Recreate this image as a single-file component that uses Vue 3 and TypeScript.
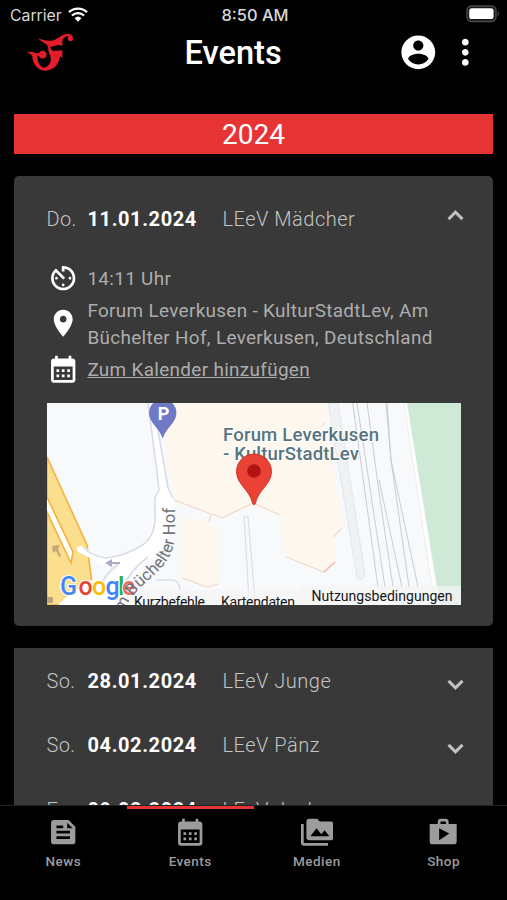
<script setup lang="ts">
import { ref } from 'vue'

interface EventRow {
  day: string
  date: string
  title: string
}

interface Tab {
  label: string
  icon: string
}

const icons = {
  account:
    'M12 2C6.48 2 2 6.48 2 12s4.48 10 10 10 10-4.48 10-10S17.52 2 12 2zm0 3c1.66 0 3 1.34 3 3s-1.34 3-3 3-3-1.34-3-3 1.34-3 3-3zm0 14.2c-2.5 0-4.71-1.28-6-3.22.03-1.99 4-3.08 6-3.08 1.99 0 5.97 1.09 6 3.08-1.29 1.94-3.5 3.22-6 3.22z',
  more: 'M12 8c1.1 0 2-.9 2-2s-.9-2-2-2-2 .9-2 2 .9 2 2 2zm0 2c-1.1 0-2 .9-2 2s.9 2 2 2 2-.9 2-2-.9-2-2-2zm0 6c-1.1 0-2 .9-2 2s.9 2 2 2 2-.9 2-2-.9-2-2-2z',
  up: 'M7.41 15.41 12 10.83l4.59 4.58L18 14l-6-6-6 6z',
  down: 'M7.41 8.59 12 13.17l4.59-4.58L18 10l-6 6-6-6z',
  timer:
    'M11 17c0 .55.45 1 1 1s1-.45 1-1-.45-1-1-1-1 .45-1 1zm0-14v4h2V5.08c3.39.49 6 3.39 6 6.92 0 3.87-3.13 7-7 7s-7-3.13-7-7c0-1.68.59-3.22 1.58-4.42L12 13l1.41-1.41-6.8-6.8v.02C4.42 6.45 3 9.05 3 12c0 4.97 4.02 9 9 9 4.97 0 9-4.03 9-9s-4.03-9-9-9h-1zm7 9c0-.55-.45-1-1-1s-1 .45-1 1 .45 1 1 1 1-.45 1-1zM6 12c0 .55.45 1 1 1s1-.45 1-1-.45-1-1-1-1 .45-1 1z',
  place:
    'M12 2C8.13 2 5 5.13 5 9c0 5.25 7 13 7 13s7-7.75 7-13c0-3.87-3.13-7-7-7zm0 9.5c-1.38 0-2.5-1.12-2.5-2.5s1.12-2.5 2.5-2.5 2.5 1.12 2.5 2.5-1.12 2.5-2.5 2.5z',
  calendar:
    'M19 4h-1V2h-2v2H8V2H6v2H5c-1.1 0-1.99.9-1.99 2L3 20c0 1.1.89 2 2 2h14c1.1 0 2-.9 2-2V6c0-1.1-.9-2-2-2zm0 16H5V10h14v10zM9 14H7v-2h2v2zm4 0h-2v-2h2v2zm4 0h-2v-2h2v2zm-8 4H7v-2h2v2zm4 0h-2v-2h2v2zm4 0h-2v-2h2v2z',
  news: 'M16 3H5c-1.1 0-2 .9-2 2v14c0 1.1.9 2 2 2h14c1.1 0 2-.9 2-2V8l-5-5zM7 7h5v2H7V7zm10 10H7v-2h10v2zm0-4H7v-2h10v2zm-2-4V5l4 4h-4z',
  media:
    'M2 6H0v5h.01L0 20c0 1.1.9 2 2 2h18v-2H2V6zm20-2h-8l-2-2H6c-1.1 0-1.99.9-1.99 2L4 16c0 1.1.9 2 2 2h16c1.1 0 2-.9 2-2V6c0-1.1-.9-2-2-2zM7 15l4.5-6 3.5 4.51 2.5-3.01L21 15H7z',
  shop: 'M16 6V4c0-1.11-.89-2-2-2h-4c-1.11 0-2 .89-2 2v2H2v13c0 1.11.89 2 2 2h16c1.11 0 2-.89 2-2V6h-6zm-6-2h4v2h-4V4zM9 18V9l7.5 4L9 18z',
}

const openEvent: EventRow = { day: 'Do.', date: '11.01.2024', title: 'LEeV Mädcher' }

const upcoming: EventRow[] = [
  { day: 'So.', date: '28.01.2024', title: 'LEeV Junge' },
  { day: 'So.', date: '04.02.2024', title: 'LEeV Pänz' },
  { day: 'Fr.', date: '09.02.2024', title: 'LEeV Jeck' },
]

const tabs: Tab[] = [
  { label: 'News', icon: icons.news },
  { label: 'Events', icon: icons.calendar },
  { label: 'Medien', icon: icons.media },
  { label: 'Shop', icon: icons.shop },
]
const activeTab = ref('Events')
</script>

<template>
  <div class="screen">
    <div class="status">
      <div class="carrier">
        <span>Carrier</span>
        <svg class="wifi" viewBox="0 0 20 15">
          <path d="M1 5.2a13 13 0 0 1 18 0" />
          <path d="M4 8.5a8.6 8.6 0 0 1 12 0" />
          <path class="wifi-dot" d="M6.6 11.2a5 5 0 0 1 6.8 0L10 14.8z" />
        </svg>
      </div>
      <span class="clock">8:50 AM</span>
      <div class="battery-wrap">
        <svg class="battery" viewBox="0 0 34 18">
          <rect x="1" y="1" width="29" height="15.5" rx="4.5" fill="#1a1a1a" stroke="#4c4c4c" stroke-width="1.4" />
          <rect x="3.2" y="3.3" width="24.4" height="10.8" rx="2.6" fill="#fff" />
          <path d="M31.6 6.2c1.7.8 1.7 4.2 0 5z" fill="#4c4c4c" />
        </svg>
      </div>
    </div>

    <header class="header">
      <svg class="logo" viewBox="78 98 144 116">
        <path
          d="M114 114C128 120 140 122 154 121C172 119 182 102 203 101C214 101 220 107 219 116C218 122 213 124 208 122C203 120 202 113 206 108C198 106 190 112 187 120L187 137L180 134C168 134 158 137 150 142C146 132 126 128 114 114Z"
        />
        <path
          d="M138 126C151 138 150 149 162 152L187 150L187 173L180 168C178 190 162 211 135 211C110 210 98 190 97 168C94 162 87 158 80 155C92 153 104 157 113 160C111 176 115 195 130 202C149 201 157 180 150 165C144 152 146 142 138 126Z"
        />
        <circle cx="128" cy="163" r="11.500" />
        <path d="M110 159L122 157V168L112 166Z" />
      </svg>
      <h1>Events</h1>
      <div class="actions">
        <svg class="account" viewBox="0 0 24 24"><path :d="icons.account" /></svg>
        <svg class="more" viewBox="0 0 24 24"><path :d="icons.more" /></svg>
      </div>
    </header>

    <main class="content">
      <div class="year">2024</div>

      <section class="card open">
        <div class="row first">
          <span class="day">{{ openEvent.day }}</span>
          <strong class="date">{{ openEvent.date }}</strong>
          <span class="title">{{ openEvent.title }}</span>
          <svg class="chevron" viewBox="0 0 24 24"><path :d="icons.up" /></svg>
        </div>
        <div class="details">
          <div class="info">
            <svg viewBox="0 0 24 24"><path :d="icons.timer" /></svg>
            <span>14:11 Uhr</span>
          </div>
          <div class="info">
            <svg viewBox="0 0 24 24"><path :d="icons.place" /></svg>
            <span>Forum Leverkusen - KulturStadtLev, Am<br />Büchelter Hof, Leverkusen, Deutschland</span>
          </div>
          <div class="info">
            <svg viewBox="0 0 24 24"><path :d="icons.calendar" /></svg>
            <a class="link">Zum Kalender hinzufügen</a>
          </div>
        </div>

        <svg class="map" viewBox="47 403 414 202" preserveAspectRatio="none">
          <rect x="47" y="403" width="414" height="202" fill="#f8f9fb" />
          <!-- buildings -->
          <path
            d="M164 403H328L325 422L343 527L335 538V562L324 572L286 557L280 516L254 506L222 518L211 515L174 500L166 450Z"
            fill="#fef7ee"
          />
          <path d="M182 517L210 523L217 529L220 584L207 587L182 578Z" fill="#fef7ee" />
          <path
            d="M174 500L211 514L209 522M212 514L222 518L253 503L280 515M286 557L324 572L335 562M333 537L342 528M182 578L207 587L219 584M325 422L322 427"
            fill="none"
            stroke="#efd9cf"
            stroke-width="1.2"
          />
          <path d="M324 572L335 562" stroke="#f5b8ae" stroke-width="1.2" />
          <!-- tracks -->
          <path d="M328 403H338L365 574Q363 582 357 578Z" fill="#eff1f3" stroke="#dfe2e6" stroke-width=".8" />
          <g fill="none" stroke="#c9ccd0" stroke-width="1">
            <path d="M352.7 403L378 587" />
            <path d="M357 403L385 587" />
            <path d="M367 403L379 492L393 587" />
            <path d="M386 403L391 460L418 587" />
            <path d="M387 403L391 460L409 587" />
            <path d="M379 480L402 587" />
          </g>
          <path d="M405 403L434 587" stroke="#fff" stroke-width="3" />
          <path d="M404 403L432 587" stroke="#e6e9ed" stroke-width=".8" />
          <path d="M407 403H461V605H440Z" fill="#ceead6" />
          <path d="M248 517L255 600M244 517L249 600M244 517H248" fill="none" stroke="#dde1e7" stroke-width="1.3" />
          <!-- motorway -->
          <path
            d="M47 457L87 545L90 568L92 583L60 605H47Z"
            fill="#fbdf8e"
            stroke="#f3b13e"
            stroke-width="1.6"
          />
          <path d="M58 605L72 592L92 580L120 605Z" fill="#fff" />
          <path d="M45 493L73 552L71 563L45 508Z" fill="#fff" stroke="#f3b13e" stroke-width="1.6" />
          <!-- street -->
          <path
            d="M148 403H163L157 427L168 488L173 498C176 520 172 548 145 562L118 590L98 600L104 582L120 565L102 564L78 552Q74 546 82 546L102 557Q128 557 146 542Q155 525 155 498L159 490L157 472Z"
            fill="#fff"
          />
          <path
            d="M148 403L157 472L159 490L155 498V520Q154 536 144 544Q126 556 106 558Q92 556 83 547M158 430L168 488L173 498M102 584Q105 574 118 564M118 595Q130 570 148 557M156 580H172Q179 580 180 590"
            fill="none"
            stroke="#d7dce6"
            stroke-width="1.6"
          />
          <path d="M105 563L112 559V562H120V564H112V567Z" fill="#a9acc8" />
          <path d="M52 546L60 545L58 549L61 556L59 557L56 551L53 553Z" fill="#c6a878" />
          <rect x="47" y="597" width="6" height="6" fill="#b9a57a" />

          <!-- parking -->
          <path d="M149 413a13.7 13.7 0 1 1 27.4 0c0 10-10 14-13.7 25.500c-3.700-11.500-13.700-15.500-13.700-25.500z" fill="#6f79c6" />
          <text class="parking" x="163.500" y="420" text-anchor="middle">P</text>

          <text class="place" x="223" y="441" textLength="156">Forum Leverkusen</text>
          <text class="place" x="223" y="460" textLength="136">- KulturStadtLev</text>

          <path
            d="M236.500 471.500a17.500 17.500 0 1 1 35 0c0 13-13 18-16 31.500q-1.500 4-3 0c-3-13.500-16-18.500-16-31.500z"
            fill="#ea4335"
            stroke="#c5221f"
            stroke-width=".8"
          />
          <circle cx="254" cy="471" r="6.800" fill="#b31412" />

          <rect x="130" y="590" width="170" height="15" fill="#f5f5f5" fill-opacity=".7" />
          <rect x="300" y="586" width="161" height="19" fill="#f5f5f5" fill-opacity=".7" />
          <text class="google" y="594.800">
            <tspan x="60" fill="#4285f4">G</tspan>
            <tspan x="78.500" fill="#ea4335">o</tspan>
            <tspan x="92" fill="#fbbc04">o</tspan>
            <tspan x="105.500" fill="#4285f4">g</tspan>
            <tspan x="118" fill="#34a853">l</tspan>
            <tspan x="122" fill="#ea4335" fill-opacity=".8">e</tspan>
          </text>
          <path id="street-line" d="M119 623C124 609 129 599 142 586C163 568 175 556 175 532V506" fill="none" />
          <text class="street">
            <textPath href="#street-line" textLength="134">Am Büchelter Hof</textPath>
          </text>
          <text class="legal" x="134" y="606.500" textLength="71">Kurzbefehle</text>
          <text class="legal" x="221" y="606.500" textLength="74">Kartendaten</text>
          <text class="legal" x="311.500" y="600.700" textLength="141">Nutzungsbedingungen</text>
        </svg>
      </section>

      <section class="card list">
        <div v-for="event in upcoming" :key="event.date" class="row">
          <span class="day">{{ event.day }}</span>
          <strong class="date">{{ event.date }}</strong>
          <span class="title">{{ event.title }}</span>
          <svg class="chevron" viewBox="0 0 24 24"><path :d="icons.down" /></svg>
        </div>
      </section>
    </main>

    <nav class="tabs">
      <button
        v-for="tab in tabs"
        :key="tab.label"
        :class="['tab', { active: tab.label === activeTab }]"
        @click="activeTab = tab.label"
      >
        <svg viewBox="0 0 24 24"><path :d="tab.icon" /></svg>
        <span>{{ tab.label }}</span>
      </button>
    </nav>
  </div>
</template>

<style>
body {
  margin: 0;
  background: #000;
}
</style>

<style scoped>
.screen {
  box-sizing: border-box;
  width: 507px;
  height: 900px;
  display: flex;
  flex-direction: column;
  overflow: hidden;
  background: #000;
  color: #fff;
  font-family: Roboto, sans-serif;
}
svg {
  display: block;
  flex: none;
  fill: currentColor;
}
.status {
  height: 30px;
  flex: none;
  display: grid;
  grid-template-columns: 1fr auto 1fr;
  align-items: center;
  padding: 0 7px 0 10px;
  font-family: Inter, sans-serif;
  font-size: 15.8px;
  color: #d8d8d8;
}
.carrier {
  display: flex;
  align-items: center;
  gap: 6.500px;
}
.wifi {
  width: 20px;
  height: 15px;
  margin-bottom: 1px;
  fill: none;
  stroke: #fff;
  stroke-width: 2.3;
}
.wifi .wifi-dot {
  fill: #fff;
  stroke: none;
}
.clock {
  font-size: 16.400px;
  font-weight: 500;
}
.battery-wrap {
  display: flex;
  justify-content: flex-end;
  padding-bottom: 2px;
}
.battery {
  width: 34px;
  height: 18px;
}
.header {
  height: 84px;
  flex: none;
  box-sizing: border-box;
  display: flex;
  padding: 0 21.500px 40px 26px;
  align-items: center;
}
.logo {
  width: 48px;
  height: 38.700px;
  color: #e51c2c;
}
h1 {
  margin: 1px 0 0 110.500px;
  font-size: 32.600px;
  font-weight: 500;
  line-height: 40px;
}
.actions {
  margin-left: auto;
  display: flex;
  align-items: center;
}
.account {
  width: 40.600px;
  height: 40.600px;
}
.more {
  width: 40.600px;
  height: 40.600px;
  margin-left: 6.500px;
}
.content {
  flex: 1;
  min-height: 0;
  overflow: hidden;
  padding: 0 14px;
}
.year {
  height: 40.400px;
  line-height: 41px;
  background: #e63334;
  text-align: center;
  font-size: 28px;
}
.card {
  margin-top: 22px;
  background: #393939;
  color: #c4c4c4;
}
.open {
  box-sizing: border-box;
  height: 449.800px;
  border-radius: 5px;
}
.row {
  height: 64.800px;
  display: flex;
  align-items: center;
  padding: 0 22.500px 0 32.500px;
  font-size: 20px;
  font-weight: 300;
}
.row.first {
  height: 85.500px;
}
.day {
  width: 41px;
  letter-spacing: 0.4px;
}
.date {
  width: 135px;
  color: #fff;
  font-weight: 700;
  letter-spacing: 0.6px;
}
.title {
  flex: 1;
  letter-spacing: 0.500px;
}
.chevron {
  width: 31px;
  height: 31px;
  position: relative;
  top: 3.500px;
  stroke: currentColor;
  stroke-width: 0.4;
}
.first .chevron {
  top: -3.500px;
}
.details {
  display: flex;
  flex-direction: column;
  gap: 2.400px;
  padding-left: 33px;
}
.info {
  display: flex;
  align-items: center;
  gap: 8px;
  font-size: 18.900px;
  line-height: 27px;
  letter-spacing: 0.33px;
  color: #adadad;
}
.info svg {
  width: 32.400px;
  height: 32.400px;
  color: #fff;
}
.link {
  text-decoration: underline;
}
.map {
  width: 414px;
  height: 202px;
  margin: 17.300px 0 0 33px;
  overflow: hidden;
}
.street {
  font-size: 16.500px;
  fill: #6f7379;
}
.parking {
  font-size: 18px;
  font-weight: 700;
  fill: #fff;
}
.place {
  font-size: 18.600px;
  font-weight: 500;
  fill: #58747f;
  stroke: #fff;
  stroke-width: 2px;
  paint-order: stroke;
}
.google {
  font-size: 25px;
  font-weight: 500;
  stroke: #fff;
  stroke-width: 2px;
  paint-order: stroke;
}
.legal {
  font-size: 14px;
  fill: #151515;
}
.tabs {
  flex: none;
  box-sizing: border-box;
  height: 95.500px;
  border-top: 1px solid #222;
  display: grid;
  grid-template-columns: repeat(4, 1fr);
}
.tab {
  box-sizing: border-box;
  border: 0;
  border-top: 3px solid transparent;
  padding: 7.500px 0 0;
  background: none;
  color: #9c9c9c;
  display: flex;
  flex-direction: column;
  align-items: center;
  gap: 4.400px;
  font-family: inherit;
  font-size: 13.500px;
  font-weight: 500;
  line-height: 16px;
  letter-spacing: 0.45px;
}
.tab.active {
  border-top-color: #e63334;
}
.tab svg {
  width: 32.400px;
  height: 32.400px;
}
</style>
